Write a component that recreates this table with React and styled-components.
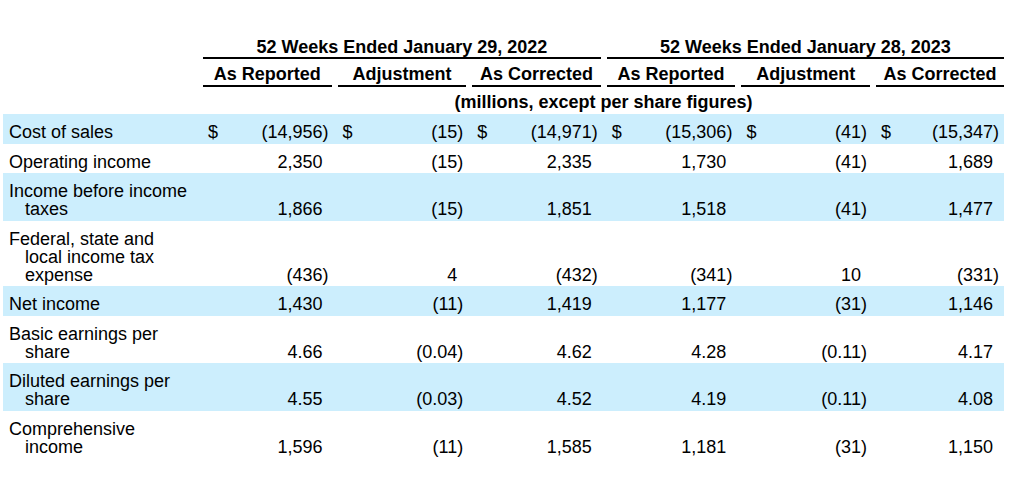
import styled, { createGlobalStyle } from 'styled-components';

const GlobalStyle = createGlobalStyle`
  html, body {
    margin: 0;
    padding: 0;
    background: #fff;
  }
  body {
    font-family: "Liberation Sans", Arial, sans-serif;
    color: #000;
  }
`;

const groups = ['52 Weeks Ended January 29, 2022', '52 Weeks Ended January 28, 2023'];
const subHeads = ['As Reported', 'Adjustment', 'As Corrected', 'As Reported', 'Adjustment', 'As Corrected'];

const rows = [
  {
    label: ['Cost of sales'],
    vals: ['(14,956)', '(15)', '(14,971)', '(15,306)', '(41)', '(15,347)'],
    dollar: true,
    shade: true,
  },
  { label: ['Operating income'], vals: ['2,350', '(15)', '2,335', '1,730', '(41)', '1,689'] },
  {
    label: ['Income before income', 'taxes'],
    vals: ['1,866', '(15)', '1,851', '1,518', '(41)', '1,477'],
    shade: true,
  },
  {
    label: ['Federal, state and', 'local income tax', 'expense'],
    vals: ['(436)', '4', '(432)', '(341)', '10', '(331)'],
  },
  { label: ['Net income'], vals: ['1,430', '(11)', '1,419', '1,177', '(31)', '1,146'], shade: true },
  { label: ['Basic earnings per', 'share'], vals: ['4.66', '(0.04)', '4.62', '4.28', '(0.11)', '4.17'] },
  {
    label: ['Diluted earnings per', 'share'],
    vals: ['4.55', '(0.03)', '4.52', '4.19', '(0.11)', '4.08'],
    shade: true,
  },
  { label: ['Comprehensive', 'income'], vals: ['1,596', '(11)', '1,585', '1,181', '(31)', '1,150'] },
];

export default function App() {
  return (
    <>
      <GlobalStyle />
      <Page>
        <Grid>
          <Spacer />
          {groups.map((g, i) => (
            <GroupHead key={g} $last={i === groups.length - 1}>
              {g}
            </GroupHead>
          ))}
        </Grid>
        <Grid $gap={6}>
          <Spacer />
          {subHeads.map((s, i) => (
            <SubHead key={i} $last={i === subHeads.length - 1}>
              {s}
            </SubHead>
          ))}
        </Grid>
        <Grid $gap={6}>
          <Spacer />
          <Units>(millions, except per share figures)</Units>
        </Grid>
        <Body>
          {rows.map((r) => (
            <Row key={r.label[0]} $shade={r.shade}>
              <Label>
                {r.label.map((line, i) => (
                  <LabelLine key={i} $indent={i > 0}>
                    {line}
                  </LabelLine>
                ))}
              </Label>
              {r.vals.map((v, i) => {
                const neg = v.startsWith('(');
                return (
                  <Value key={i} $last={i === r.vals.length - 1}>
                    <Dollar>{r.dollar ? '$' : ''}</Dollar>
                    <Num>{neg ? v.slice(0, -1) : v}</Num>
                    <Paren>{neg ? ')' : ''}</Paren>
                  </Value>
                );
              })}
            </Row>
          ))}
        </Body>
      </Page>
    </>
  );
}

const Page = styled.div`
  padding: 38px 0 0 3px;
  width: 1001px;
`;

const Grid = styled.div`
  display: grid;
  grid-template-columns: 200px repeat(5, 134.6px) 128px;
  margin-top: ${(p) => p.$gap || 0}px;
  font-weight: bold;
  font-size: 18px;
  line-height: 18px;
`;

const Spacer = styled.div``;

const GroupHead = styled.div`
  grid-column: span 3;
  text-align: center;
  padding-bottom: 1px;
  border-bottom: 2px solid #000;
  margin-right: ${(p) => (p.$last ? 0 : 6)}px;
  white-space: nowrap;
`;

const SubHead = styled.div`
  text-align: center;
  padding-bottom: 2px;
  border-bottom: 2px solid #000;
  margin-right: ${(p) => (p.$last ? 0 : 6)}px;
  white-space: nowrap;
`;

const Units = styled.div`
  grid-column: span 6;
  text-align: center;
  white-space: nowrap;
`;

const Body = styled.div`
  margin-top: 3px;
`;

const Row = styled.div`
  display: grid;
  grid-template-columns: 200px repeat(5, 134.6px) 128px;
  align-items: end;
  padding: 9px 0 2.5px;
  background: ${(p) => (p.$shade ? '#cceefd' : 'transparent')};
  font-size: 18px;
  line-height: 18px;
`;

const Label = styled.div`
  padding-left: 6px;
`;

const LabelLine = styled.div`
  padding-left: ${(p) => (p.$indent ? 16 : 0)}px;
  white-space: nowrap;
`;

const Value = styled.div`
  display: flex;
  align-items: flex-end;
  padding-left: 5px;
  padding-right: ${(p) => (p.$last ? 5 : 9)}px;
  white-space: nowrap;
`;

const Dollar = styled.span`
  width: 12px;
`;

const Num = styled.span`
  flex: 1;
  text-align: right;
`;

const Paren = styled.span`
  width: 6px;
`;
